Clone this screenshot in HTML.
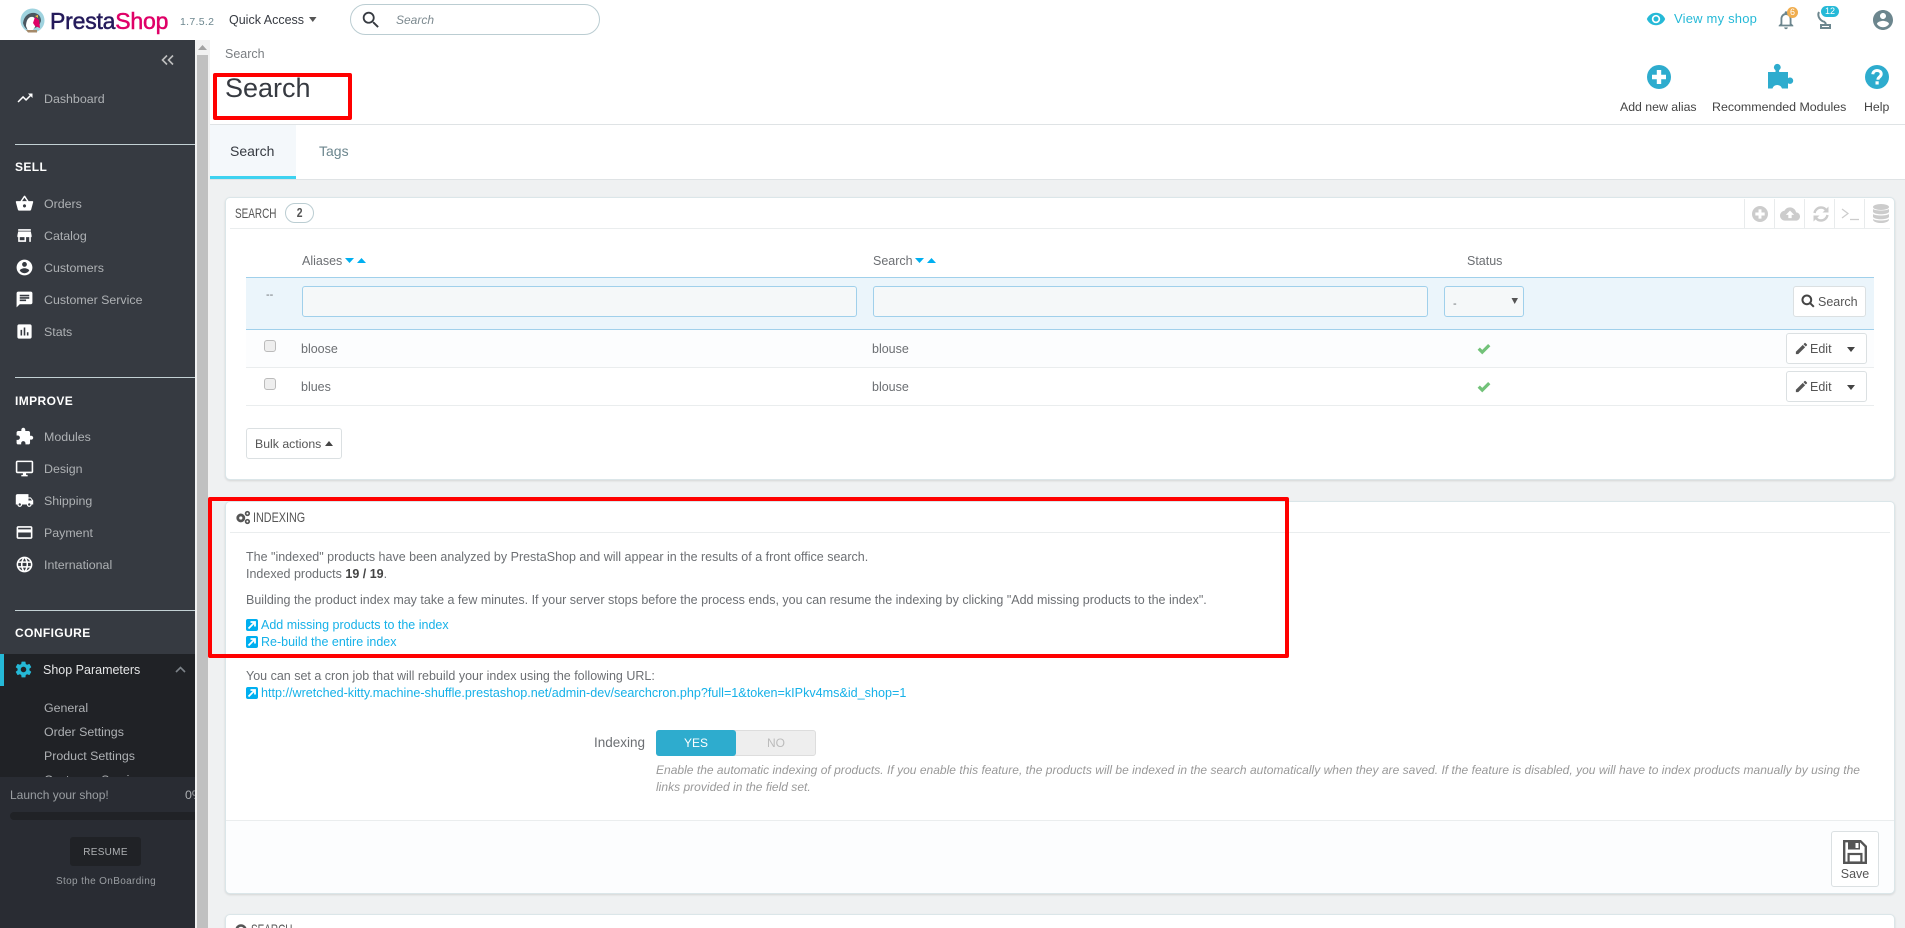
<!DOCTYPE html>
<html lang="en"><head><meta charset="utf-8"><title>Search</title>
<style>
*{box-sizing:border-box}
html,body{margin:0;width:1905px;height:928px;overflow:hidden;background:#eff1f2;font-family:"Liberation Sans",sans-serif;font-size:12.5px;color:#6c6f73}
#root{position:absolute;left:0;top:0;width:1905px;height:928px;overflow:hidden;background:#eff1f2}
.a{position:absolute}
.t{position:absolute;white-space:nowrap;line-height:20px;height:20px}
svg{position:absolute;display:block}
#hd{left:0;top:0;width:1905px;height:40px;background:#fff}
#sb{left:0;top:40px;width:195px;height:888px;background:#363a41;overflow:hidden}
#sb .t{color:#aeb1b4;font-size:12.4px}
#sb svg{fill:#fff}
.ln{position:absolute;left:15px;width:180px;height:1px;background:#c3d0d4}
#sb .sec{font-weight:bold;color:#fff;letter-spacing:.4px;font-size:12px}
#track{left:195px;top:40px;width:15px;height:888px;background:#f1f1f1}
#thumb{left:197px;top:55px;width:11px;height:873px;background:#c0c0c0}
.pan{position:absolute;left:225px;width:1670px;background:#fff;border:1px solid #dbe6e9;border-radius:5px;box-shadow:0 1px 2px rgba(0,0,0,.12)}
.hl{position:absolute;height:1px;background:#eaedee}
.nar{color:#555;font-size:14px;transform-origin:0 50%}
.ipt{position:absolute;top:286px;height:31px;background:#f5f8f9;border:1px solid #a0d0eb;border-radius:3px}
.btn{position:absolute;background:#fff;border:1px solid #dbe0e2;border-radius:3px}
.lnk{color:#16b1e8}
.red{position:absolute;border:4px solid #f00;border-radius:2px}
.d{position:absolute;top:199px;width:1px;height:29px;background:#e8ebec}
.hlp{font-size:12px;font-style:italic;color:#999;letter-spacing:.02px}
</style></head><body>
<div id="root">

<div id="hd" class="a">
 <svg style="left:20px;top:8px" width="25" height="25" viewBox="0 0 25 25">
  <circle cx="12.5" cy="12.5" r="12" fill="#9fd3df"/>
  <path d="M3 15C4 7 10 4 15 5c4 1 6 4 6 8l-2 5-10 5C6 21 4 19 3 15z" fill="#4a5660"/>
  <path d="M6 18c0-6 3-10 7-9 3 1 3 6 2 10l-3 4H8z" fill="#fff"/>
  <path d="M15 9l4 3 1 8-5-2-2-3z" fill="#df0067"/>
  <path d="M15 8l3-1 0 3z" fill="#f2b33d"/>
  <path d="M6 22h11v2.500H8z" fill="#a58a6a"/>
 </svg>
 <div class="t" style="left:50px;top:9px;font-size:23px;line-height:24px;height:24px;color:#251b5b;-webkit-text-stroke:.5px currentColor;letter-spacing:-.2px">Presta<span style="color:#df0067">Shop</span></div>
 <div class="t" style="left:180px;top:12px;font-size:10.500px;color:#6c868e;letter-spacing:.3px">1.7.5.2</div>
 <div class="t" style="left:229px;top:10px;font-size:12.500px;color:#363a41">Quick Access</div>
 <svg style="left:308px;top:17px" width="10" height="6" viewBox="0 0 10 6"><path d="M1 0h7.500L4.800 5z" fill="#555"/></svg>
 <div class="a" style="left:350px;top:4px;width:250px;height:31px;border:1px solid #bbcdd2;border-radius:16px;background:#fff"></div>
 <svg style="left:360px;top:9px" width="22" height="22" viewBox="0 0 24 24"><path fill="#363a41" d="M15.500 14h-.79l-.28-.27C15.410 12.590 16 11.110 16 9.500 16 5.910 13.090 3 9.500 3S3 5.910 3 9.500 5.910 16 9.500 16c1.610 0 3.090-.59 4.230-1.570l.27.28v.79l5 4.990L20.490 19l-4.990-5zm-6 0C7.010 14 5 11.990 5 9.500S7.010 5 9.500 5 14 7.010 14 9.500 11.990 14 9.500 14z"/></svg>
 <div class="t" style="left:396px;top:10px;font-size:12px;font-style:italic;color:#7d8a90">Search</div>

 <svg style="left:1646px;top:9px" width="20" height="20" viewBox="0 0 24 24"><path fill="#25b9d7" d="M12 4.500C7 4.500 2.730 7.610 1 12c1.730 4.390 6 7.500 11 7.500s9.270-3.110 11-7.500c-1.730-4.390-6-7.500-11-7.500zM12 17c-2.760 0-5-2.240-5-5s2.240-5 5-5 5 2.240 5 5-2.240 5-5 5zm0-8c-1.660 0-3 1.340-3 3s1.340 3 3 3 3-1.340 3-3-1.340-3-3-3z"/></svg>
 <div class="t" style="left:1674px;top:9px;font-size:13px;color:#25b9d7;letter-spacing:.2px">View my shop</div>
 <svg style="left:1775px;top:9px" width="22" height="22" viewBox="0 0 24 24"><path fill="#6c868e" d="M12 22c1.100 0 2-.9 2-2h-4c0 1.100.9 2 2 2zm6-6v-5c0-3.070-1.630-5.640-4.500-6.320V4c0-.83-.67-1.500-1.500-1.500s-1.500.67-1.500 1.500v.68C7.640 5.360 6 7.920 6 11v5l-2 2v1h16v-1l-2-2zm-2 1H8v-6c0-2.480 1.510-4.500 4-4.500s4 2.020 4 4.500v6z"/></svg>
 <div class="a" style="left:1787px;top:7px;width:11px;height:11px;border-radius:50%;background:#f0ad4e;color:#fff;font-size:9px;line-height:11px;text-align:center">6</div>
 <svg style="left:1815px;top:9px" width="22" height="22" viewBox="0 0 22 22"><path fill="none" stroke="#6c868e" stroke-width="2" d="M4 3C2 7 5 12 10 13M6 19h9v-3H6zM10 13l1 3"/></svg>
 <div class="a" style="left:1821px;top:6px;width:18px;height:11px;border-radius:6px;background:#25b9d7;color:#fff;font-size:9px;line-height:11px;text-align:center">12</div>
 <svg style="left:1871px;top:8px" width="24" height="24" viewBox="0 0 24 24"><path fill="#6c868e" d="M12 2C6.480 2 2 6.480 2 12s4.480 10 10 10 10-4.480 10-10S17.520 2 12 2zm0 3c1.660 0 3 1.340 3 3s-1.340 3-3 3-3-1.340-3-3 1.340-3 3-3zm0 14.200c-2.500 0-4.710-1.280-6-3.220.03-1.990 4-3.080 6-3.080 1.990 0 5.970 1.090 6 3.080-1.290 1.940-3.500 3.220-6 3.220z"/></svg>
</div>

<!-- page head -->
<div class="a" style="left:210px;top:40px;width:1695px;height:85px;background:#fff;border-bottom:1px solid #dfe3e5"></div>
<div class="t" style="left:225px;top:44px;color:#7a7e82">Search</div>
<div class="t" style="left:225px;top:73px;font-size:27px;line-height:30px;height:30px;color:#363a41">Search</div>
<div class="red" style="left:213px;top:73px;width:139px;height:47px"></div>

<svg style="left:1647px;top:65px" width="24" height="24" viewBox="0 0 24 24"><circle cx="12" cy="12" r="12" fill="#2eacce"/><path d="M5 12h14M12 5v14" stroke="#fff" stroke-width="4.400"/></svg>
<div class="t" style="left:1620px;top:97px;font-size:12.300px;color:#444">Add new alias</div>
<svg style="left:1766px;top:62px" width="30" height="30" viewBox="0 0 30 30"><path fill="#2eacce" d="M2 10h7.500V8.200a3.400 3.400 0 1 1 3.600 0V10H22v6.200a3.200 3.200 0 1 1 0 5V26.500h-6a5 5 0 0 0-9.500 0H2z"/></svg>
<div class="t" style="left:1712px;top:97px;font-size:12.400px;color:#444">Recommended Modules</div>
<svg style="left:1865px;top:65px" width="24" height="24" viewBox="0 0 24 24"><circle cx="12" cy="12" r="12" fill="#2eacce"/><path d="M7.800 9.300C8 6.800 9.800 5.500 12 5.500c2.400 0 4.200 1.400 4.200 3.500 0 3-3.200 3-3.200 5.300v.5" fill="none" stroke="#fff" stroke-width="3"/><rect x="10.500" y="16.300" width="3.200" height="3.200" fill="#fff"/></svg>
<div class="t" style="left:1864px;top:97px;font-size:12.300px;color:#444">Help</div>

<!-- tabs -->
<div class="a" style="left:210px;top:125px;width:1695px;height:55px;background:#fff;border-bottom:1px solid #dfe3e5"></div>
<div class="a" style="left:210px;top:125px;width:86px;height:54px;background:#f4f8fb;border-bottom:3px solid #3ed2f0"></div>
<div class="t" style="left:230px;top:141px;font-size:14px;color:#363a41">Search</div>
<div class="t" style="left:319px;top:141px;font-size:14px;color:#6c868e">Tags</div>

<!-- sidebar -->
<div id="sb" class="a">
 <svg style="left:160px;top:14px;fill:none" width="15" height="12" viewBox="0 0 15 12"><path d="M7 1.500L2.500 6 7 10.500M13 1.500L8.500 6 13 10.500" fill="none" stroke="#bebebe" stroke-width="1.600"/></svg>
 <svg style="left:16px;top:49px" width="18" height="18" viewBox="0 0 24 24"><path d="M16 6l2.290 2.290-4.880 4.880-4-4L2 16.590 3.410 18l6-6 4 4 6.300-6.290L22 12V6z"/></svg>
 <div class="t" style="left:44px;top:49px">Dashboard</div>
 <div class="ln" style="top:104px"></div>
 <div class="t sec" style="left:15px;top:117px">SELL</div>

 <svg style="left:15px;top:154px" width="19" height="19" viewBox="0 0 24 24"><path d="M17.210 9l-4.380-6.560c-.19-.28-.51-.42-.83-.42-.32 0-.64.140-.83.430L6.790 9H2c-.55 0-1 .45-1 1 0 .09.010.18.040.27l2.540 9.270c.23.840 1 1.460 1.920 1.460h13c.92 0 1.690-.62 1.930-1.460l2.540-9.270L23 10c0-.55-.45-1-1-1h-4.790zM9 9l3-4.400L15 9H9zm3 8c-1.100 0-2-.9-2-2s.9-2 2-2 2 .9 2 2-.9 2-2 2z"/></svg>
 <div class="t" style="left:44px;top:154px">Orders</div>
 <svg style="left:15px;top:186px" width="19" height="19" viewBox="0 0 24 24"><path d="M20 4H4v2h16V4zm1 10v-2l-1-5H4l-1 5v2h1v6h10v-6h4v6h2v-6h1zm-9 4H6v-4h6v4z"/></svg>
 <div class="t" style="left:44px;top:186px">Catalog</div>
 <svg style="left:15px;top:218px" width="19" height="19" viewBox="0 0 24 24"><path d="M12 2C6.480 2 2 6.480 2 12s4.480 10 10 10 10-4.480 10-10S17.520 2 12 2zm0 3c1.660 0 3 1.340 3 3s-1.340 3-3 3-3-1.340-3-3 1.340-3 3-3zm0 14.200c-2.500 0-4.710-1.280-6-3.220.03-1.990 4-3.080 6-3.080 1.990 0 5.970 1.090 6 3.080-1.290 1.940-3.500 3.220-6 3.220z"/></svg>
 <div class="t" style="left:44px;top:218px">Customers</div>
 <svg style="left:15px;top:250px" width="19" height="19" viewBox="0 0 24 24"><path d="M20 2H4c-1.100 0-1.990.9-1.990 2L2 22l4-4h14c1.100 0 2-.9 2-2V4c0-1.100-.9-2-2-2zM6 9h12v2H6V9zm8 5H6v-2h8v2zm4-6H6V6h12v2z"/></svg>
 <div class="t" style="left:44px;top:250px">Customer Service</div>
 <svg style="left:15px;top:282px" width="19" height="19" viewBox="0 0 24 24"><path d="M19 3H5c-1.100 0-2 .9-2 2v14c0 1.100.9 2 2 2h14c1.100 0 2-.9 2-2V5c0-1.100-.9-2-2-2zM9 17H7v-7h2v7zm4 0h-2V7h2v10zm4 0h-2v-4h2v4z"/></svg>
 <div class="t" style="left:44px;top:282px">Stats</div>

 <div class="ln" style="top:337px"></div>
 <div class="t sec" style="left:15px;top:351px">IMPROVE</div>
 <svg style="left:15px;top:387px" width="19" height="19" viewBox="0 0 24 24"><path d="M20.500 11H19V7c0-1.100-.9-2-2-2h-4V3.500C13 2.120 11.880 1 10.500 1S8 2.120 8 3.500V5H4c-1.100 0-1.990.9-1.990 2v3.800H3.500c1.490 0 2.700 1.210 2.700 2.700s-1.210 2.700-2.700 2.700H2V20c0 1.100.9 2 2 2h3.800v-1.500c0-1.490 1.210-2.700 2.700-2.700 1.490 0 2.700 1.210 2.700 2.700V22H17c1.100 0 2-.9 2-2v-4h1.500c1.380 0 2.500-1.120 2.500-2.500S21.880 11 20.500 11z"/></svg>
 <div class="t" style="left:44px;top:387px">Modules</div>
 <svg style="left:15px;top:419px" width="19" height="19" viewBox="0 0 24 24"><path d="M21 2H3c-1.100 0-2 .9-2 2v12c0 1.100.9 2 2 2h7v2H8v2h8v-2h-2v-2h7c1.100 0 2-.9 2-2V4c0-1.100-.9-2-2-2zm0 14H3V4h18v12z"/></svg>
 <div class="t" style="left:44px;top:419px">Design</div>
 <svg style="left:15px;top:451px" width="19" height="19" viewBox="0 0 24 24"><path d="M20 8h-3V4H3c-1.100 0-2 .9-2 2v11h2c0 1.660 1.340 3 3 3s3-1.340 3-3h6c0 1.660 1.340 3 3 3s3-1.340 3-3h2v-5l-3-4zM6 18.500c-.83 0-1.500-.67-1.500-1.500s.67-1.500 1.500-1.500 1.500.67 1.500 1.500-.67 1.500-1.500 1.500zm13.500-9l1.960 2.500H17V9.500h2.500zm-1.500 9c-.83 0-1.500-.67-1.500-1.500s.67-1.500 1.500-1.500 1.500.67 1.500 1.500-.67 1.500-1.500 1.500z"/></svg>
 <div class="t" style="left:44px;top:451px">Shipping</div>
 <svg style="left:15px;top:483px" width="19" height="19" viewBox="0 0 24 24"><path d="M20 4H4c-1.110 0-1.990.89-1.990 2L2 18c0 1.110.89 2 2 2h16c1.110 0 2-.89 2-2V6c0-1.110-.89-2-2-2zm0 14H4v-6h16v6zm0-10H4V6h16v2z"/></svg>
 <div class="t" style="left:44px;top:483px">Payment</div>
 <svg style="left:15px;top:515px" width="19" height="19" viewBox="0 0 24 24"><path d="M11.990 2C6.470 2 2 6.480 2 12s4.470 10 9.990 10C17.520 22 22 17.520 22 12S17.520 2 11.990 2zm6.930 6h-2.950c-.32-1.250-.78-2.450-1.380-3.560 1.840.63 3.370 1.910 4.330 3.560zM12 4.040c.83 1.200 1.480 2.530 1.910 3.960h-3.820c.43-1.430 1.080-2.760 1.910-3.960zM4.260 14C4.100 13.360 4 12.690 4 12s.1-1.360.26-2h3.380c-.08.66-.14 1.320-.14 2 0 .68.060 1.340.14 2H4.260zm.82 2h2.950c.32 1.250.78 2.450 1.380 3.560-1.840-.63-3.370-1.900-4.330-3.560zm2.950-8H5.080c.96-1.660 2.490-2.930 4.330-3.560C8.810 5.550 8.350 6.750 8.030 8zM12 19.960c-.83-1.200-1.480-2.530-1.910-3.960h3.820c-.43 1.430-1.080 2.760-1.910 3.960zM14.340 14H9.660c-.09-.66-.16-1.320-.16-2 0-.68.070-1.350.16-2h4.680c.09.65.16 1.320.16 2 0 .68-.07 1.340-.16 2zm.25 5.560c.6-1.110 1.060-2.310 1.380-3.560h2.950c-.96 1.650-2.490 2.930-4.330 3.560zM16.360 14c.08-.66.14-1.320.14-2 0-.68-.06-1.340-.14-2h3.380c.16.640.26 1.310.26 2s-.1 1.360-.26 2h-3.380z"/></svg>
 <div class="t" style="left:44px;top:515px">International</div>

 <div class="ln" style="top:570px"></div>
 <div class="t sec" style="left:15px;top:583px">CONFIGURE</div>
 <div class="a" style="left:0;top:614px;width:195px;height:123px;background:#202226"></div>
 <div class="a" style="left:0;top:614px;width:4px;height:32px;background:#25b9d7"></div>
 <svg style="left:14px;top:620px;fill:#25b9d7" width="19" height="19" viewBox="0 0 24 24"><path d="M19.430 12.980c.04-.32.070-.64.070-.98s-.03-.66-.07-.98l2.110-1.650c.19-.15.240-.42.120-.64l-2-3.460c-.12-.22-.39-.3-.61-.22l-2.490 1c-.52-.4-1.080-.73-1.690-.98l-.38-2.650C14.460 2.180 14.250 2 14 2h-4c-.25 0-.46.18-.49.420l-.38 2.650c-.61.250-1.170.59-1.690.98l-2.490-1c-.23-.09-.49 0-.61.220l-2 3.460c-.13.220-.07.490.12.640l2.110 1.650c-.04.320-.07.650-.07.980s.03.660.07.980l-2.110 1.650c-.19.150-.24.420-.12.640l2 3.460c.12.220.39.300.61.220l2.490-1c.52.400 1.080.730 1.690.980l.38 2.650c.03.240.24.420.49.420h4c.25 0 .46-.18.49-.42l.38-2.650c.61-.25 1.170-.59 1.690-.98l2.490 1c.23.090.49 0 .61-.22l2-3.460c.12-.22.070-.49-.12-.64l-2.110-1.650zM12 15.500c-1.930 0-3.500-1.570-3.500-3.500s1.570-3.500 3.500-3.500 3.500 1.570 3.500 3.500-1.570 3.500-3.500 3.500z"/></svg>
 <div class="t" style="left:43px;top:620px;color:#e4e5e6;font-size:12.500px">Shop Parameters</div>
 <svg style="left:175px;top:626px;fill:none" width="11" height="8" viewBox="0 0 11 8"><path d="M1 6l4.500-4.500L10 6" stroke="#7d8389" stroke-width="1.600"/></svg>
 <div class="t" style="left:44px;top:658px">General</div>
 <div class="t" style="left:44px;top:682px">Order Settings</div>
 <div class="t" style="left:44px;top:706px">Product Settings</div>
 <div class="t" style="left:44px;top:730px">Customer Service</div>

 <div class="a" style="left:0;top:737px;width:195px;height:151px;background:#292c33"></div>
 <div class="t" style="left:10px;top:745px;font-size:12px;color:#9a9ea2">Launch your shop!</div>
 <div class="t" style="left:185px;top:745px;width:10px;overflow:hidden">0%</div>
 <div class="a" style="left:10px;top:772px;width:185px;height:8px;background:#202226;border-radius:4px 0 0 4px"></div>
 <div class="a" style="left:70px;top:797px;width:71px;height:29px;background:#202226;border-radius:3px"></div>
 <div class="t" style="left:70px;top:803px;width:71px;text-align:center;font-size:10px;letter-spacing:.3px">RESUME</div>
 <div class="t" style="left:56px;top:832px;font-size:10px;letter-spacing:.35px;color:#9a9ea2">Stop the OnBoarding</div>
</div>
<div id="track" class="a"></div>
<div id="thumb" class="a"></div>
<svg style="left:197px;top:44px" width="11" height="8" viewBox="0 0 11 8"><path d="M5.500 1L10 6H1z" fill="#a3a3a3"/></svg>

<!-- panel 1 -->
<div class="pan" style="top:197px;height:283px"></div>
<div class="hl" style="left:230px;top:228px;width:1660px"></div>
<div class="t nar" style="left:235px;top:203px;transform:scaleX(.71)">SEARCH</div>
<div class="a" style="left:285px;top:203px;width:29px;height:20px;border:1px solid #bbcdd2;border-radius:10px;text-align:center;font:bold 13px/18px 'Liberation Sans',sans-serif;color:#555"><span style="display:inline-block;transform:scaleX(.8)">2</span></div>
<div class="d" style="left:1744px"></div><div class="d" style="left:1774px"></div><div class="d" style="left:1804px"></div><div class="d" style="left:1834px"></div><div class="d" style="left:1864px"></div>
<svg style="left:1752px;top:206px" width="16" height="16" viewBox="0 0 24 24"><circle cx="12" cy="12" r="12" fill="#ccc"/><path d="M5 12h14M12 5v14" stroke="#fff" stroke-width="4.400"/></svg>
<svg style="left:1780px;top:204px" width="20" height="20" viewBox="0 0 24 24"><path fill="#ccc" d="M19.350 10.040C18.670 6.590 15.640 4 12 4 9.110 4 6.600 5.640 5.350 8.040 2.340 8.360 0 10.910 0 14c0 3.310 2.690 6 6 6h13c2.760 0 5-2.240 5-5 0-2.640-2.050-4.780-4.650-4.960zM14 13v4h-4v-4H7l5-5 5 5h-3z"/></svg>
<svg style="left:1813px;top:206px" width="16" height="16" viewBox="0 0 16 16"><path fill="none" stroke="#ccc" stroke-width="2.400" d="M1.500 7C2.200 3.500 5 1.500 8 1.500c2.500 0 4.200 1 5.300 3M14.500 9c-.7 3.500-3.500 5.500-6.500 5.500-2.500 0-4.200-1-5.300-3"/><path fill="#ccc" d="M15.500 .5v6h-6zM.5 15.500v-6h6z"/></svg>
<svg style="left:1841px;top:206px" width="19" height="16" viewBox="0 0 19 16"><path fill="none" stroke="#ccc" stroke-width="1.200" d="M1 3l6 4.500L1 12M9 13.500h9"/></svg>
<svg style="left:1873px;top:204px" width="16" height="19" viewBox="0 0 16 19"><g fill="#ccc"><ellipse cx="8" cy="3" rx="8" ry="3"/><path d="M0 5c2 2 14 2 16 0v3c-2 3-14 3-16 0zM0 10c2 2 14 2 16 0v3c-2 3-14 3-16 0zM0 15c2 2 14 2 16 0v1c-2 4-14 4-16 0z"/></g></svg>

<div class="t" style="left:302px;top:251px">Aliases</div>
<svg style="left:345px;top:258px" width="22" height="7" viewBox="0 0 22 7"><path d="M0 0h9L4.500 5zM12 5h9l-4.500-5z" fill="#00aff0"/></svg>
<div class="t" style="left:873px;top:251px">Search</div>
<svg style="left:915px;top:258px" width="22" height="7" viewBox="0 0 22 7"><path d="M0 0h9L4.500 5zM12 5h9l-4.500-5z" fill="#00aff0"/></svg>
<div class="t" style="left:1467px;top:251px">Status</div>

<div class="a" style="left:246px;top:277px;width:1628px;height:53px;background:#ebf5fb;border-top:1px solid #a0d0eb;border-bottom:1px solid #a0d0eb"></div>
<div class="t" style="left:266px;top:285px;font-size:11px">--</div>
<div class="ipt" style="left:302px;width:555px"></div>
<div class="ipt" style="left:873px;width:555px"></div>
<div class="ipt" style="left:1444px;width:80px"></div>
<div class="t" style="left:1453px;top:294px;font-size:11px">-</div>
<svg style="left:1511px;top:298px" width="8" height="7" viewBox="0 0 8 7"><path d="M.5 0h6.500L3.700 6z" fill="#555"/></svg>
<div class="btn" style="left:1793px;top:286px;width:73px;height:31px"></div>
<svg style="left:1801px;top:294px" width="14" height="14" viewBox="0 0 24 24"><g fill="none" stroke="#444" stroke-width="3.400"><circle cx="10" cy="10" r="7.500"/><path d="M15.500 15.500L22 22"/></g></svg>
<div class="t" style="left:1818px;top:292px;color:#555">Search</div>

<div class="a" style="left:246px;top:330px;width:1628px;height:38px;background:#fcfdfe;border-bottom:1px solid #eaedee"></div>
<div class="a" style="left:246px;top:368px;width:1628px;height:38px;background:#fff;border-bottom:1px solid #eaedee"></div>
<div class="a" style="left:264px;top:340px;width:12px;height:12px;background:#eee;border:1px solid #bbb;border-radius:3px"></div>
<div class="a" style="left:264px;top:378px;width:12px;height:12px;background:#eee;border:1px solid #bbb;border-radius:3px"></div>
<div class="t" style="left:301px;top:339px">bloose</div><div class="t" style="left:872px;top:339px">blouse</div>
<div class="t" style="left:301px;top:377px">blues</div><div class="t" style="left:872px;top:377px">blouse</div>
<svg style="left:1477px;top:341px" width="14" height="14" viewBox="0 0 24 24"><path d="M3 13l6 6L21 7" fill="none" stroke="#72c279" stroke-width="5.500"/></svg>
<svg style="left:1477px;top:379px" width="14" height="14" viewBox="0 0 24 24"><path d="M3 13l6 6L21 7" fill="none" stroke="#72c279" stroke-width="5.500"/></svg>

<div class="btn" style="left:1786px;top:333px;width:81px;height:31px"></div>
<svg style="left:1794px;top:341px" width="15" height="15" viewBox="0 0 24 24"><path fill="#555" d="M3 17.250V21h3.750L17.810 9.940l-3.750-3.750L3 17.250zM20.710 7.040c.39-.39.39-1.020 0-1.410l-2.340-2.340c-.39-.39-1.020-.39-1.410 0l-1.830 1.830 3.750 3.750 1.830-1.830z"/></svg>
<div class="t" style="left:1810px;top:339px;color:#555">Edit</div>
<svg style="left:1846px;top:347px" width="10" height="6" viewBox="0 0 10 6"><path d="M1 0h8L5 5z" fill="#444"/></svg>
<div class="btn" style="left:1786px;top:371px;width:81px;height:31px"></div>
<svg style="left:1794px;top:379px" width="15" height="15" viewBox="0 0 24 24"><path fill="#555" d="M3 17.250V21h3.750L17.810 9.940l-3.750-3.750L3 17.250zM20.710 7.040c.39-.39.39-1.020 0-1.410l-2.340-2.340c-.39-.39-1.020-.39-1.410 0l-1.830 1.830 3.750 3.750 1.830-1.830z"/></svg>
<div class="t" style="left:1810px;top:377px;color:#555">Edit</div>
<svg style="left:1846px;top:385px" width="10" height="6" viewBox="0 0 10 6"><path d="M1 0h8L5 5z" fill="#444"/></svg>

<div class="btn" style="left:246px;top:428px;width:96px;height:31px"></div>
<div class="t" style="left:255px;top:434px;font-size:12.300px;color:#555">Bulk actions</div>
<svg style="left:325px;top:441px" width="9" height="5" viewBox="0 0 9 5"><path d="M0 5h8L4 0z" fill="#444"/></svg>

<!-- panel 2 -->
<div class="pan" style="top:501px;height:393px"></div>
<div class="hl" style="left:230px;top:532px;width:1660px"></div>
<svg style="left:235px;top:510px" width="16" height="15" viewBox="0 0 18 17"><g fill="#555"><circle cx="6.500" cy="9" r="5"/><circle cx="14" cy="4" r="3"/><circle cx="14" cy="13" r="3"/></g><circle cx="6.500" cy="9" r="1.800" fill="#fff"/><circle cx="14" cy="4" r="1.100" fill="#fff"/><circle cx="14" cy="13" r="1.100" fill="#fff"/></svg>
<div class="t nar" style="left:253px;top:507px;transform:scaleX(.77)">INDEXING</div>

<div class="t" style="left:246px;top:547px">The "indexed" products have been analyzed by PrestaShop and will appear in the results of a front office search.</div>
<div class="t" style="left:246px;top:564px">Indexed products <b style="color:#444">19 / 19</b>.</div>
<div class="t" style="left:246px;top:590px">Building the product index may take a few minutes. If your server stops before the process ends, you can resume the indexing by clicking "Add missing products to the index".</div>

<svg style="left:246px;top:619px" width="12" height="12" viewBox="0 0 12 12"><rect width="12" height="12" rx="2" fill="#00aff0"/><path d="M2.500 9.500L8 4M4.500 3h4.500v4.500" fill="none" stroke="#fff" stroke-width="1.800"/></svg>
<div class="t lnk" style="left:261px;top:615px">Add missing products to the index</div>
<svg style="left:246px;top:636px" width="12" height="12" viewBox="0 0 12 12"><rect width="12" height="12" rx="2" fill="#00aff0"/><path d="M2.500 9.500L8 4M4.500 3h4.500v4.500" fill="none" stroke="#fff" stroke-width="1.800"/></svg>
<div class="t lnk" style="left:261px;top:632px">Re-build the entire index</div>

<div class="t" style="left:246px;top:666px">You can set a cron job that will rebuild your index using the following URL:</div>
<svg style="left:246px;top:687px" width="12" height="12" viewBox="0 0 12 12"><rect width="12" height="12" rx="2" fill="#00aff0"/><path d="M2.500 9.500L8 4M4.500 3h4.500v4.500" fill="none" stroke="#fff" stroke-width="1.800"/></svg>
<div class="t lnk" style="left:261px;top:683px;font-size:12.600px">http://wretched-kitty.machine-shuffle.prestashop.net/admin-dev/searchcron.php?full=1&amp;token=kIPkv4ms&amp;id_shop=1</div>

<div class="red" style="left:208px;top:497px;width:1081px;height:161px"></div>

<div class="t" style="left:594px;top:733px;font-size:13.500px">Indexing</div>
<div class="a" style="left:656px;top:730px;width:160px;height:26px;background:#eee;border:1px solid #ddd;border-radius:3px"></div>
<div class="a" style="left:656px;top:730px;width:80px;height:26px;background:#2eacce;border-radius:3px;color:#fff;text-align:center;font-size:12px;line-height:27px">YES</div>
<div class="a" style="left:736px;top:730px;width:80px;height:26px;color:#bbb;text-align:center;font-size:12px;line-height:27px">NO</div>
<div class="t hlp" style="left:656px;top:760px">Enable the automatic indexing of products. If you enable this feature, the products will be indexed in the search automatically when they are saved. If the feature is disabled, you will have to index products manually by using the</div>
<div class="t hlp" style="left:656px;top:777px">links provided in the field set.</div>

<div class="a" style="left:226px;top:820px;width:1668px;height:73px;background:#fcfdfe;border-top:1px solid #eaedee;border-radius:0 0 5px 5px"></div>
<div class="btn" style="left:1831px;top:831px;width:48px;height:56px"></div>
<svg style="left:1843px;top:840px" width="24" height="24" viewBox="0 0 24 24"><path d="M1.200 1.200h16.300l5.300 5.300v16.300H1.200z" fill="none" stroke="#555" stroke-width="2.400"/><path d="M5 1.500h12v8H5z" fill="#555"/><path d="M12.500 3h3v5h-3z" fill="#fff"/><rect x="5.600" y="14" width="12.800" height="8.500" fill="none" stroke="#555" stroke-width="2.200"/></svg>
<div class="t" style="left:1831px;top:864px;width:48px;text-align:center;color:#555">Save</div>

<!-- panel 3 -->
<div class="pan" style="top:914px;height:40px"></div>
<svg style="left:235px;top:924px" width="12" height="12" viewBox="0 0 24 24"><circle cx="12" cy="12" r="9" fill="none" stroke="#555" stroke-width="5"/></svg>
<div class="t nar" style="left:251px;top:919px;transform:scaleX(.71)">SEARCH</div>

</div>
</body></html>
